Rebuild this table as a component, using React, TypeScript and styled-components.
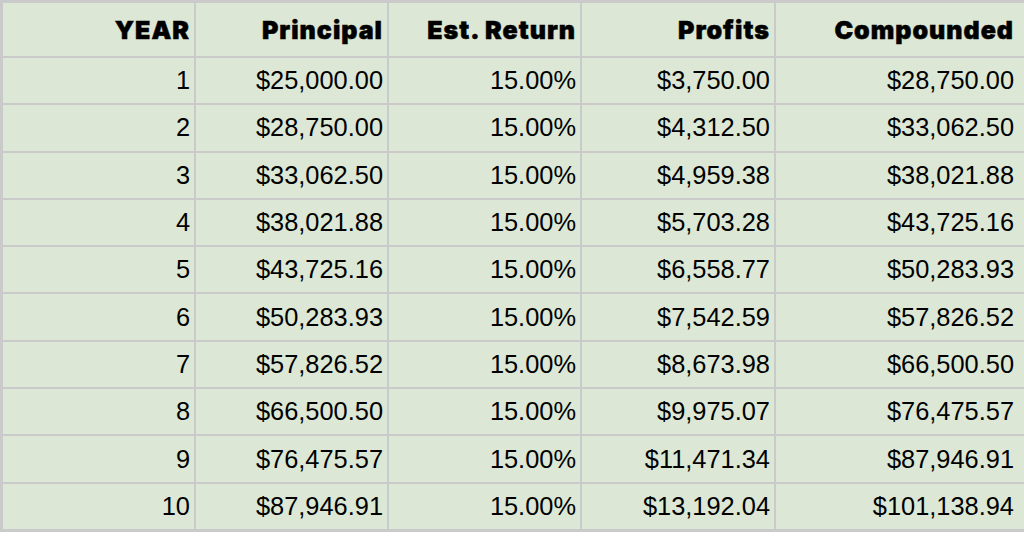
import React from "react";
import styled, { createGlobalStyle } from "styled-components";

const Global = createGlobalStyle`
  html, body { margin: 0; padding: 0; background: #ffffff; }
  body { font-family: "Liberation Sans", Arial, sans-serif; }
`;

const Sheet = styled.div`
  width: 1024px;
  box-sizing: border-box;
  display: grid;
  grid-template-columns: 191px 191px 191px 192px 1fr;
  grid-template-rows: 53px repeat(10, 45.3px);
  gap: 2px;
  padding: 3px 0 3px 3px;
  background: #cacaca;
`;

const Cell = styled.div<{ $head?: boolean; $last?: boolean }>`
  background: #dce8d5;
  display: flex;
  align-items: center;
  justify-content: flex-end;
  padding-right: ${(p) => (p.$last ? "10px" : "4px")};
  color: #000;
  white-space: nowrap;
  font-family: ${(p) => (p.$head ? `"Inter", "Liberation Sans", sans-serif` : `"Liberation Sans", Arial, sans-serif`)};
  font-weight: ${(p) => (p.$head ? 900 : 400)};
  font-size: ${(p) => (p.$head ? "25px" : "25.4px")};
  letter-spacing: ${(p) => (p.$head ? "1px" : "0")};
  -webkit-text-stroke: ${(p) => (p.$head ? "0.5px #000" : "0")};
`;

const headers = ["YEAR", "Principal", "Est. Return", "Profits", "Compounded"];

const rows: string[][] = [
  ["1", "$25,000.00", "15.00%", "$3,750.00", "$28,750.00"],
  ["2", "$28,750.00", "15.00%", "$4,312.50", "$33,062.50"],
  ["3", "$33,062.50", "15.00%", "$4,959.38", "$38,021.88"],
  ["4", "$38,021.88", "15.00%", "$5,703.28", "$43,725.16"],
  ["5", "$43,725.16", "15.00%", "$6,558.77", "$50,283.93"],
  ["6", "$50,283.93", "15.00%", "$7,542.59", "$57,826.52"],
  ["7", "$57,826.52", "15.00%", "$8,673.98", "$66,500.50"],
  ["8", "$66,500.50", "15.00%", "$9,975.07", "$76,475.57"],
  ["9", "$76,475.57", "15.00%", "$11,471.34", "$87,946.91"],
  ["10", "$87,946.91", "15.00%", "$13,192.04", "$101,138.94"],
];

export default function App() {
  const lastCol = headers.length - 1;
  return (
    <>
      <Global />
      <Sheet>
        {headers.map((h, j) => (
          <Cell key={h} $head $last={j === lastCol}>
            {h}
          </Cell>
        ))}
        {rows.map((r, i) =>
          r.map((v, j) => (
            <Cell key={`${i}-${j}`} $last={j === lastCol}>
              {v}
            </Cell>
          ))
        )}
      </Sheet>
    </>
  );
}
